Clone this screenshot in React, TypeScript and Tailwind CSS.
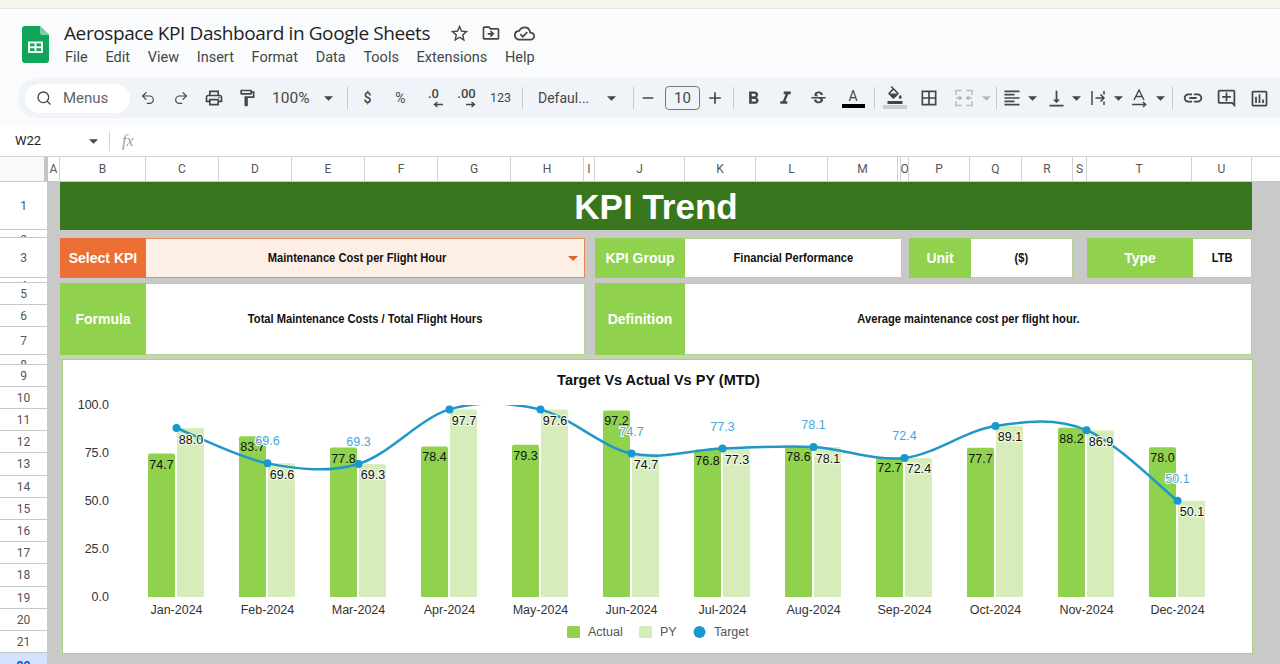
import React from "react";
import { Undo2, Redo2, Search } from "lucide-react";
import {
  MdOutlinePrint, MdOutlineFormatPaint, MdFormatBold, MdFormatItalic, MdStrikethroughS,
  MdOutlineFormatColorFill, MdBorderAll, MdFormatAlignLeft, MdVerticalAlignBottom, MdLink,
  MdOutlineAddComment, MdOutlineInsertChart, MdOutlineStarBorder, MdOutlineDriveFileMove,
  MdOutlineCloudDone, MdRemove, MdAdd,
} from "react-icons/md";

const months = ["Jan-2024","Feb-2024","Mar-2024","Apr-2024","May-2024","Jun-2024","Jul-2024","Aug-2024","Sep-2024","Oct-2024","Nov-2024","Dec-2024"];
const actual = [74.7,83.7,77.8,78.4,79.3,97.2,76.8,78.6,72.7,77.7,88.2,78.0];
const py = [88.0,69.6,69.3,97.7,97.6,74.7,77.3,78.1,72.4,89.1,86.9,50.1];
const showTarget = [false,true,true,false,false,true,true,true,true,false,false,true];
const cx = (i: number) => 176.5 + i * 91;
const vy = (v: number) => 597 - 1.92 * v;

function linePath() {
  const p = py.map((v, i) => [cx(i), vy(v)]);
  let d = `M${p[0][0]} ${p[0][1]}`;
  for (let i = 0; i < p.length - 1; i++) {
    const a = p[Math.max(i - 1, 0)], b = p[i], c = p[i + 1], e = p[Math.min(i + 2, p.length - 1)];
    d += ` C${b[0] + (c[0] - a[0]) / 6} ${b[1] + (c[1] - a[1]) / 6} ${c[0] - (e[0] - b[0]) / 6} ${c[1] - (e[1] - b[1]) / 6} ${c[0]} ${c[1]}`;
  }
  return d;
}

const F = "Liberation Sans, Arial, sans-serif";

function Chart() {
  return (
    <svg viewBox="63 360 1189 293" className="block w-full h-full" style={{ fontFamily: F }}>
      <defs>
        <clipPath id="plot"><rect x="100" y="405" width="1150" height="200" /></clipPath>
      </defs>
      <text x="658.5" y="385" textAnchor="middle" fontSize="14.5" fontWeight="700" fill="#111">Target Vs Actual Vs PY (MTD)</text>
      {[0, 25, 50, 75, 100].map((v) => (
        <text key={v} x="109" y={vy(v) + 4} textAnchor="end" fontSize="12.5" fill="#333">{v.toFixed(1)}</text>
      ))}
      {months.map((m, i) => (
        <g key={m}>
          <path d={`M${cx(i) - 28.5} 597 V${vy(actual[i]) + 2} q0 -2 2 -2 H${cx(i) - 3.5} q2 0 2 2 V597 Z`} fill="#90d14e" />
          <path d={`M${cx(i) + 0.5} 597 V${vy(py[i]) + 2} q0 -2 2 -2 H${cx(i) + 25.5} q2 0 2 2 V597 Z`} fill="#d6edbb" />
          <text x={cx(i)} y="614" textAnchor="middle" fontSize="12.5" fill="#333">{m}</text>
          <text x={cx(i) - 15} y={vy(actual[i]) + 15} textAnchor="middle" fontSize="12.5" fill="#111">{actual[i].toFixed(1)}</text>
        </g>
      ))}
      <path d={linePath()} clipPath="url(#plot)" fill="none" stroke="#1f98c9" strokeWidth="2.5" />
      {months.map((m, i) => (
        <text key={m} x={cx(i) + 14.5} y={vy(py[i]) + 15.5} textAnchor="middle" fontSize="12.5" fill="#111" stroke="#eef8e2" strokeWidth="2.5" paintOrder="stroke">{py[i].toFixed(1)}</text>
      ))}
      {months.map((m, i) => (
        <circle key={m} cx={cx(i)} cy={vy(py[i])} r="4" fill="#1798cf" />
      ))}
      {months.map((m, i) =>
        showTarget[i] ? (
          <text key={m} x={cx(i)} y={vy(py[i]) - 18} textAnchor="middle" fontSize="12.5" fill="#4aa6d8" stroke="#fff" strokeWidth="2" paintOrder="stroke">{py[i].toFixed(1)}</text>
        ) : null
      )}
      <rect x="567" y="626" width="13" height="12" rx="1.5" fill="#90d14e" />
      <text x="588" y="636" fontSize="12.5" fill="#555">Actual</text>
      <rect x="639" y="626" width="13" height="12" rx="1.5" fill="#d6edbb" />
      <text x="660" y="636" fontSize="12.5" fill="#555">PY</text>
      <circle cx="699.5" cy="632" r="6" fill="#1798cf" />
      <text x="714" y="636" fontSize="12.5" fill="#555">Target</text>
    </svg>
  );
}

function SheetsLogo() {
  return (
    <svg width="27" height="37" viewBox="0 0 27 37" className="block">
      <path d="M3 0H18L27 9V34a3 3 0 0 1-3 3H3a3 3 0 0 1-3-3V3a3 3 0 0 1 3-3Z" fill="#0fa55a" />
      <path d="M18 0L27 9H20a2 2 0 0 1-2-2Z" fill="#7fd0a4" />
      <path d="M6 15.5H21V27H6Z M8 17.5V20.3H12.5V17.5Z M14.5 17.5V20.3H19V17.5Z M8 22.3V25H12.5V22.3Z M14.5 22.3V25H19V22.3Z" fill="#f1faf5" fillRule="evenodd" />
    </svg>
  );
}

const Caret = ({ light }: { light?: boolean }) => (
  <svg width="9" height="5" viewBox="0 0 10 5" className="block shrink-0"><path d="M0 0H10L5 5Z" fill={light ? "#b4b7bb" : "#444746"} /></svg>
);
const Sep = ({ cls }: { cls: string }) => <div className={`w-px h-[22px] bg-[#c7c9cc] shrink-0 ${cls}`} />;

const btn = "flex items-center justify-center shrink-0 text-[#444746] h-full";

function DecArrow({ right }: { right?: boolean }) {
  return (
    <svg width="10" height="7" viewBox="0 0 10 7" className="block mt-[1px] ml-[8px]">
      {right ? <path d="M0 3.5H8M5.5 1L8.5 3.5L5.5 6" stroke="#444746" strokeWidth="1.4" fill="none" /> : <path d="M10 3.5H2M4.5 1L1.5 3.5L4.5 6" stroke="#444746" strokeWidth="1.4" fill="none" />}
    </svg>
  );
}

function Toolbar() {
  return (
    <div className="h-[40px] shrink-0 ml-[18px] pl-[7px] rounded-l-[20px] bg-[#f0f4f9] flex items-center font-['Roboto',sans-serif]">
      <div className="w-[105px] h-[29px] rounded-full bg-white flex items-center shrink-0 text-[#444746]">
        <Search size={16} strokeWidth={2} className="ml-[11px]" />
        <span className="ml-[11px] text-[15px] leading-none text-[#5f6368]">Menus</span>
      </div>
      <div className={`${btn} w-[32px] ml-[2px]`}><Undo2 size={16} strokeWidth={1.8} /></div>
      <div className={`${btn} w-[33px]`}><Redo2 size={16} strokeWidth={1.8} /></div>
      <div className={`${btn} w-[33px]`}><MdOutlinePrint size={20} /></div>
      <div className={`${btn} w-[33px]`}><MdOutlineFormatPaint size={20} /></div>
      <div className={`${btn} w-[84px] justify-start pl-[9px]`}>
        <span className="text-[15.5px] w-[52px] leading-none mt-[2px]">100%</span><Caret />
      </div>
      <Sep cls="" />
      <div className={`${btn} w-[33px] ml-[3px] text-[14px] font-medium`}>$</div>
      <div className={`${btn} w-[33px] text-[14px]`}>%</div>
      <div className={`${btn} w-[33px] flex-col`}><span className="text-[13px] leading-[12px] font-medium">.0</span><DecArrow /></div>
      <div className={`${btn} w-[33px] flex-col`}><span className="text-[13px] leading-[12px] font-medium">.00</span><DecArrow right /></div>
      <div className={`${btn} w-[35px] text-[12.5px]`}>123</div>
      <Sep cls="ml-[4px]" />
      <div className={`${btn} w-[110px] justify-start pl-[15px]`}>
        <span className="text-[14px] w-[69px] leading-none -mt-[1px]">Defaul...</span><Caret />
      </div>
      <Sep cls="" />
      <div className={`${btn} w-[28px]`}><MdRemove size={18} /></div>
      <div className="w-[35px] h-[24px] ml-[3px] rounded-[4px] border border-[#747775] flex items-center justify-center text-[15px] text-[#444746] shrink-0">10</div>
      <div className={`${btn} w-[30px]`}><MdAdd size={20} /></div>
      <Sep cls="ml-[3px]" />
      <div className={`${btn} w-[32px] ml-[3px]`}><MdFormatBold size={21} /></div>
      <div className={`${btn} w-[33px]`}><MdFormatItalic size={21} /></div>
      <div className={`${btn} w-[33px]`}><MdStrikethroughS size={19} /></div>
      <div className={`${btn} w-[34px] ml-[1px] flex-col`}>
        <span className="text-[14px] leading-[14px] mt-[1px]">A</span>
        <div className="w-[23px] h-[4px] bg-black mt-[1px]" />
      </div>
      <Sep cls="ml-[4px]" />
      <div className={`${btn} w-[32px] ml-[4px] flex-col`}>
        <MdOutlineFormatColorFill size={18} className="-mt-[2px]" />
        <div className="w-[24px] h-[4px] bg-[#cccccc] mt-[1px]" />
      </div>
      <div className={`${btn} w-[35px]`}><MdBorderAll size={20} /></div>
      <div className={`${btn} w-[35px]`}>
        <svg width="18" height="18" viewBox="0 0 18 18" fill="none" stroke="#b4b7bb" strokeWidth="1.4">
          <path d="M1 6V1.5H6.5M11.5 1.5H17V6M1 12V16.5H6.5M11.5 16.5H17V12M1 9H6M4 7L6.5 9L4 11M17 9H12M14 7L11.5 9L14 11" />
        </svg>
      </div>
      <div className={`${btn} w-[10px]`}><Caret light /></div>
      <Sep cls="ml-[5px]" />
      <div className={`${btn} w-[30px]`}><MdFormatAlignLeft size={20} /></div>
      <div className={`${btn} w-[10px]`}><Caret /></div>
      <div className={`${btn} w-[30px] ml-[4px]`}><MdVerticalAlignBottom size={21} /></div>
      <div className={`${btn} w-[10px]`}><Caret /></div>
      <div className={`${btn} w-[30px] ml-[2px]`}>
        <svg width="18" height="18" viewBox="0 0 18 18" fill="none" stroke="#444746" strokeWidth="1.5">
          <path d="M3 2V16M15 2V5.5M15 12.5V16M6.5 9H14.5M11.5 5.5L15 9L11.5 12.5" />
        </svg>
      </div>
      <div className={`${btn} w-[10px]`}><Caret /></div>
      <div className={`${btn} w-[32px]`}>
        <svg width="20" height="20" viewBox="0 0 20 20" fill="none" stroke="#444746" strokeWidth="1.4">
          <path d="M5 12L10 2L15 12M6.8 8.5H13.2M3 16.5H16M14 14L16.7 16.5L14 19" />
        </svg>
      </div>
      <div className={`${btn} w-[10px]`}><Caret /></div>
      <Sep cls="ml-[7px]" />
      <div className={`${btn} w-[40px]`}><MdLink size={22} /></div>
      <div className={`${btn} w-[27px]`}><MdOutlineAddComment size={21} /></div>
      <div className={`${btn} w-[39px]`}><MdOutlineInsertChart size={21} /></div>
    </div>
  );
}

const colHeaders: [string, string][] = [
  ["A","w-[12px]"],["B","w-[86px]"],["C","w-[73px]"],["D","w-[73px]"],["E","w-[73px]"],["F","w-[73px]"],["G","w-[73px]"],["H","w-[73px]"],
  ["I","w-[11px]"],["J","w-[90px]"],["K","w-[71px]"],["L","w-[72px]"],["M","w-[70px]"],["","w-[3px]"],["O","w-[8px]"],["P","w-[61px]"],
  ["Q","w-[52px]"],["R","w-[51px]"],["S","w-[14px]"],["T","w-[105px]"],["U","w-[60px]"],
];

const rowHeaders: [string, string][] = [
  ["1","h-[48px] items-center"],["2","h-[8px] items-start pt-[3px]"],["3","h-[40px] items-center"],["4","h-[5px] items-start pt-[1px]"],
  ["5","h-[22px] items-center"],["6","h-[22px] items-center"],["7","h-[28px] items-center"],["8","h-[10px] items-start pt-[3px]"],
  ["9","h-[22px] items-center"],["10","h-[22px] items-center"],["11","h-[22px] items-center"],["12","h-[22px] items-center"],
  ["13","h-[23px] items-center"],["14","h-[22px] items-center"],["15","h-[22px] items-center"],["16","h-[22px] items-center"],
  ["17","h-[22px] items-center"],["18","h-[23px] items-center"],["19","h-[22px] items-center"],["20","h-[22px] items-center"],["21","h-[22px] items-center"],
];

const label = "flex items-center justify-center shrink-0 self-stretch -my-px -ml-px bg-[#90d14e] text-white font-bold text-[14px]";
const value = "flex items-center justify-center flex-1 h-full";
const Val = ({ children }: { children: React.ReactNode }) => (
  <span className="inline-block whitespace-nowrap text-[12px] font-bold text-[#111] scale-x-[0.93]">{children}</span>
);

export default function App() {
  return (
    <div className="w-[1280px] h-[664px] overflow-hidden flex flex-col bg-[#f9fbfd]">
      <div className="h-[9px] shrink-0 bg-[#f5f7ec] border-b border-[#e6e9da]" />
      <div className="h-[69px] shrink-0 flex pt-[17px] pl-[22px] font-['Roboto',sans-serif]">
        <SheetsLogo />
        <div className="ml-[15px] -mt-[7px]">
          <div className="flex items-center h-[28px]">
            <span className="font-['Open_Sans',sans-serif] text-[19px] leading-[28px] text-[#1f1f1f] tracking-[-0.4px] w-[385px]">Aerospace KPI Dashboard in Google Sheets</span>
            <MdOutlineStarBorder size={21} className="text-[#444746]" />
            <MdOutlineDriveFileMove size={20} className="text-[#444746] ml-[11px]" />
            <MdOutlineCloudDone size={21} className="text-[#444746] ml-[13px]" />
          </div>
          <div className="flex gap-[17.7px] text-[14.5px] leading-[20px] text-[#444746] ml-[1px] mt-[1px]">
            {["File","Edit","View","Insert","Format","Data","Tools","Extensions","Help"].map((m) => <span key={m}>{m}</span>)}
          </div>
        </div>
      </div>
      <Toolbar />
      <div className="h-[8px] shrink-0" />
      <div className="h-[31px] shrink-0 bg-white flex items-center font-['Roboto',sans-serif] border-b border-[#d3d3d3]">
        <span className="ml-[15px] w-[74px] text-[13px] text-[#1f1f1f]">W22</span>
        <Caret />
        <div className="w-px h-[20px] bg-[#d5d5d5] ml-[11px]" />
        <span className="ml-[12px] text-[16px] italic font-['Liberation_Serif',serif] text-[#9aa0a6]">fx</span>
      </div>
      <div className="h-[25px] shrink-0 flex bg-white border-b border-[#c8c8c8] font-['Roboto',sans-serif] text-[12px] text-[#555]">
        <div className="w-[48px] shrink-0 bg-[#f8f9fa] border-r-[4px] border-[#c4c4c4]" />
        {colHeaders.map(([c, w], i) => (
          <div key={i} className={`${w} shrink-0 flex items-center justify-center border-r border-[#d3d3d3] overflow-hidden`}>{c}</div>
        ))}
      </div>
      <div className="flex-1 flex min-h-0">
        <div className="w-[47px] shrink-0 bg-white flex flex-col font-['Roboto',sans-serif] text-[12px] text-[#555] overflow-hidden">
          {rowHeaders.map(([r, c]) => (
            <div key={r} className={`${c} shrink-0 flex justify-center overflow-hidden border-b border-[#c8c8c8] box-border`}>
              <span className="leading-[14px]">{r}</span>
            </div>
          ))}
          <div className="flex-1 bg-[#d3e3fd] flex justify-center items-start pt-[4px] text-[#0b57d0] font-bold">22</div>
        </div>
        <div className="flex-1 bg-[#c9c9c9] pl-[13px] flex flex-col font-['Liberation_Sans',Arial,sans-serif]">
          <div className="w-[1192px] flex flex-col">
            <div className="h-[48px] bg-[#38761d] flex items-center justify-center text-white font-bold text-[35px] leading-none">KPI Trend</div>
            <div className="h-[8px]" />
            <div className="h-[40px] flex">
              <div className="w-[525px] h-full flex bg-[#fdeee6] border border-[#e58a59]">
                <div className={`${label} w-[86px] bg-[#ec7033]`}>Select KPI</div>
                <div className={`${value} pl-[1px]`}><Val>Maintenance Cost per Flight Hour</Val></div>
                <div className="flex items-center pr-[6px]"><svg width="10" height="5" viewBox="0 0 10 5"><path d="M0 0H10L5 5Z" fill="#e0682d" /></svg></div>
              </div>
              <div className="w-[307px] h-full ml-[10px] flex bg-white border border-[#b5d392]">
                <div className={`${label} w-[90px]`}>KPI Group</div>
                <div className={value}><Val>Financial Performance</Val></div>
              </div>
              <div className="w-[164px] h-full ml-[7px] flex bg-white border border-[#b5d392]">
                <div className={`${label} w-[62px]`}>Unit</div>
                <div className={value}><Val>($)</Val></div>
              </div>
              <div className="w-[165px] h-full ml-[14px] flex bg-white border border-[#b5d392]">
                <div className={`${label} w-[106px]`}>Type</div>
                <div className={value}><Val>LTB</Val></div>
              </div>
            </div>
            <div className="h-[5px]" />
            <div className="h-[72px] flex">
              <div className="w-[525px] h-full flex bg-white border border-[#b5d392]">
                <div className={`${label} w-[86px]`}>Formula</div>
                <div className={value}><Val>Total Maintenance Costs / Total Flight Hours</Val></div>
              </div>
              <div className="w-[657px] h-full ml-[10px] flex bg-white border border-[#b5d392]">
                <div className={`${label} w-[90px]`}>Definition</div>
                <div className={value}><Val>Average maintenance cost per flight hour.</Val></div>
              </div>
            </div>
            <div className="h-[4px] bg-[#c4d5b3]" />
            <div className="h-[295px] w-[1191px] ml-[2px] box-border bg-white border border-[#a9cf80]">
              <Chart />
            </div>
          </div>
        </div>
      </div>
    </div>
  );
}
